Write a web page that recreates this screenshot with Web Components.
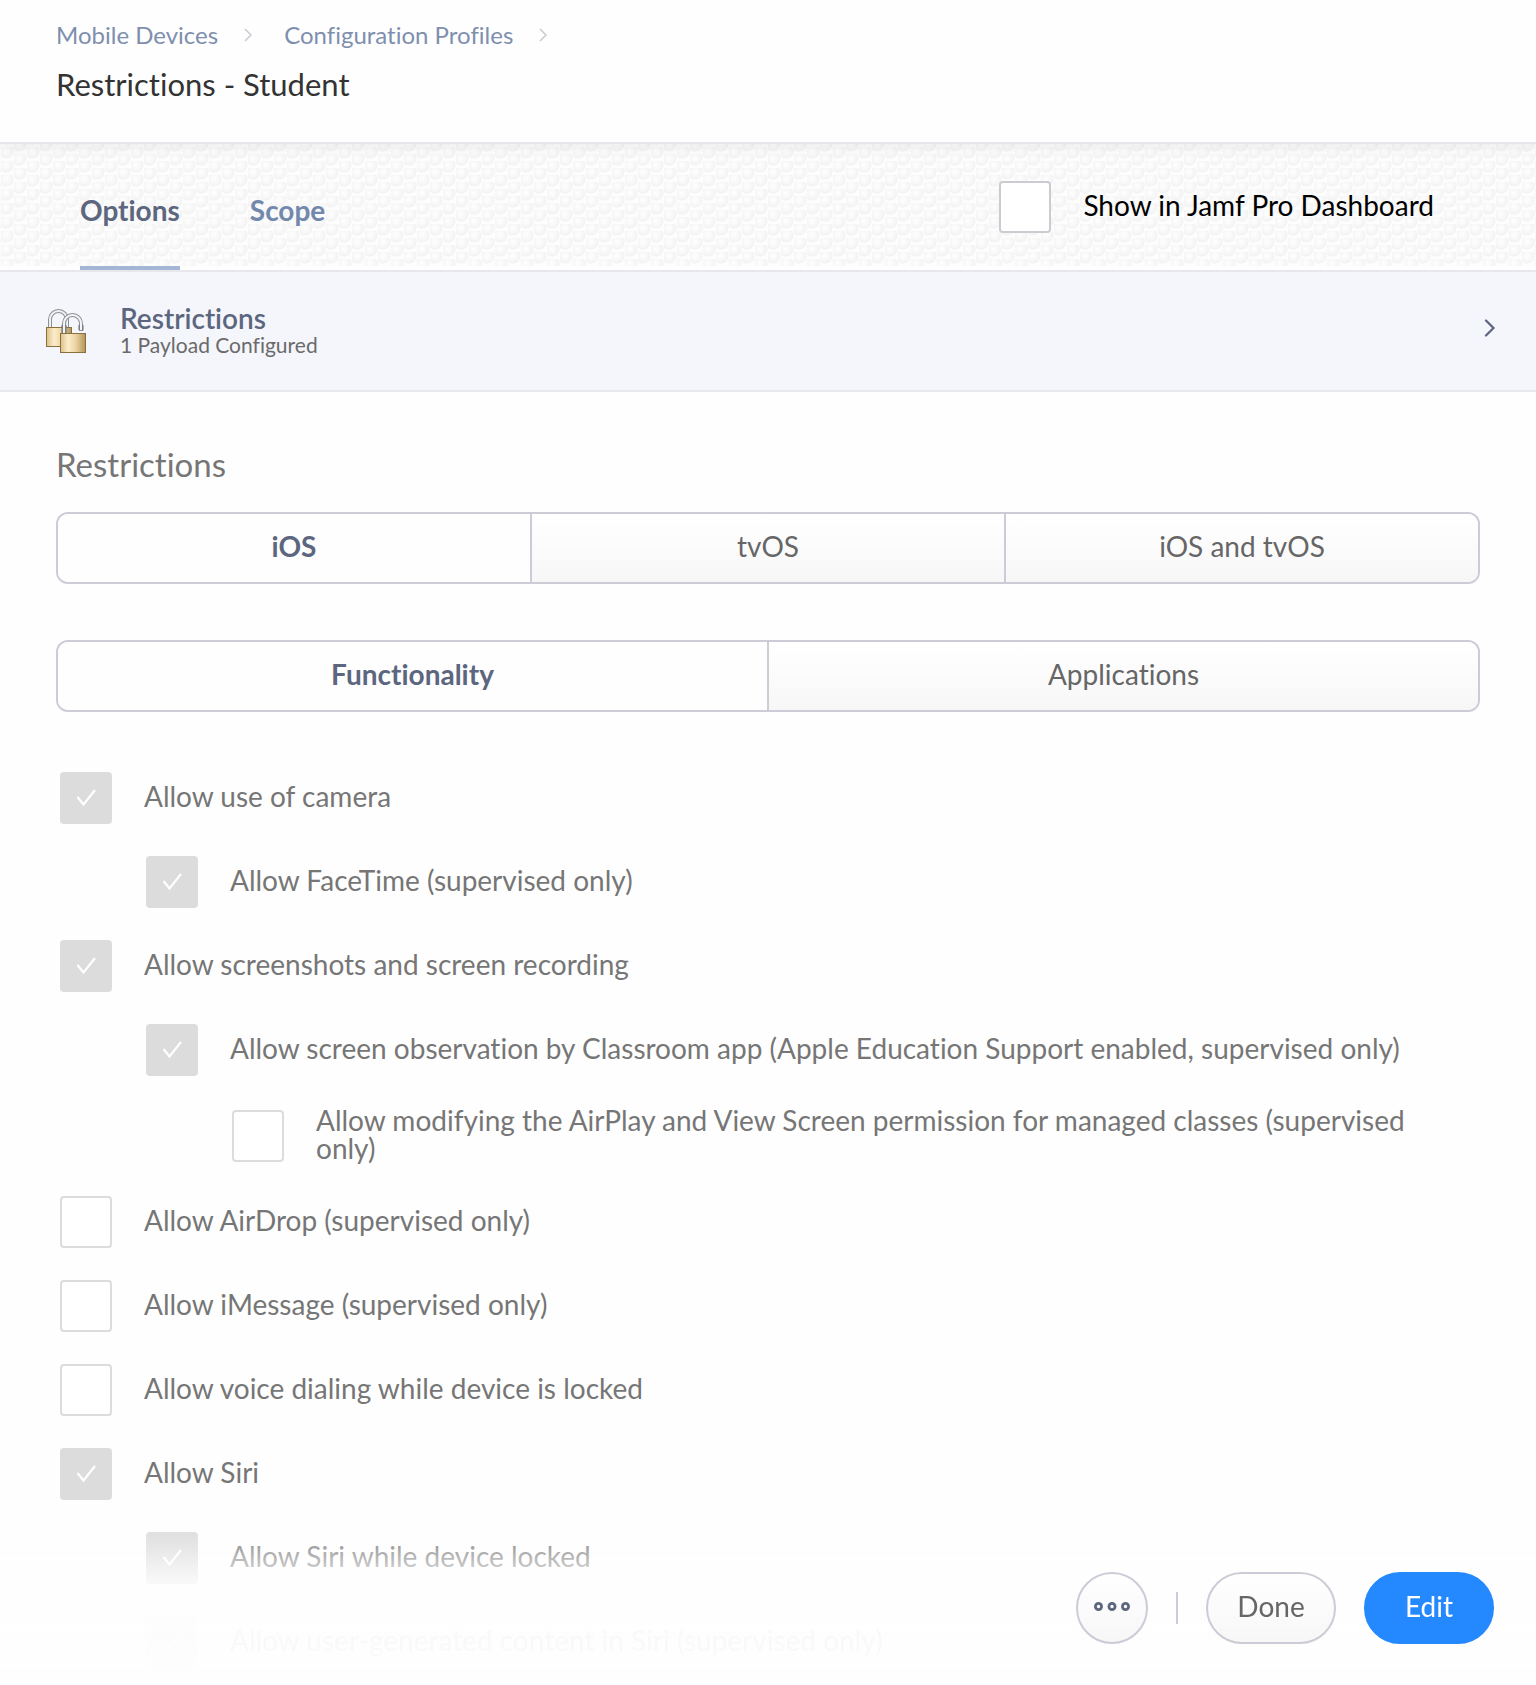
<!DOCTYPE html>
<html lang="en">
<head>
    <meta charset="UTF-8">
    <meta name="viewport" content="width=device-width, initial-scale=1.0">
    <title>Restrictions - Student</title>
    <style>
        body {
            margin: 0;
            background: #fefefe;
            font-family: Lato, "Open Sans", sans-serif;
            font-size: 28px;
            font-variant-ligatures: none;
            line-height: 28px;
            color: #666;
        }
    </style>
</head>
<body>
    <config-page>
        <page-header slot="header" heading="Restrictions - Student">
            <crumb-link href="#devices">Mobile Devices</crumb-link>
            <crumb-link href="#profiles">Configuration Profiles</crumb-link>
        </page-header>

        <tab-bar slot="tabs">
            <tab-item href="#options" active>Options</tab-item>
            <tab-item href="#scope">Scope</tab-item>
            <check-option slot="extra" variant="dark">Show in Jamf Pro Dashboard</check-option>
        </tab-bar>

        <payload-row slot="payload" heading="Restrictions" href="#restrictions">1 Payload Configured</payload-row>

        <section-title>Restrictions</section-title>
        <segmented-control items="iOS|tvOS|iOS and tvOS" label="Platform"></segmented-control>
        <segmented-control items="Functionality|Applications" label="Category"></segmented-control>

        <option-list>
            <check-option checked disabled>Allow use of camera</check-option>
            <check-option level="1" checked disabled>Allow FaceTime (supervised only)</check-option>
            <check-option checked disabled>Allow screenshots and screen recording</check-option>
            <check-option level="1" checked disabled>Allow screen observation by Classroom app (Apple Education Support enabled, supervised only)</check-option>
            <check-option level="2" disabled>Allow modifying the AirPlay and View Screen permission for managed classes (supervised only)</check-option>
            <check-option disabled>Allow AirDrop (supervised only)</check-option>
            <check-option disabled>Allow iMessage (supervised only)</check-option>
            <check-option disabled>Allow voice dialing while device is locked</check-option>
            <check-option checked disabled>Allow Siri</check-option>
            <check-option level="1" checked disabled>Allow Siri while device locked</check-option>
            <check-option level="1" checked disabled>Allow user-generated content in Siri (supervised only)</check-option>
        </option-list>

        <action-footer slot="footer">
            <action-button kind="more"></action-button>
            <action-button>Done</action-button>
            <action-button kind="primary">Edit</action-button>
        </action-footer>
    </config-page>

    <script>
        class ConfigPage extends HTMLElement {
            connectedCallback() {
                this.attachShadow({ mode: 'open' });
                this.shadowRoot.innerHTML = `
                    <style>
                        :host {
                            display: block;
                        }

                        main {
                            padding: 52px 56px 16px;
                        }
                    </style>
                    <slot name="header"></slot>
                    <slot name="tabs"></slot>
                    <slot name="payload"></slot>
                    <main><slot></slot></main>
                    <slot name="footer"></slot>
                `;
            }
        }

        class PageHeader extends HTMLElement {
            connectedCallback() {
                this.attachShadow({ mode: 'open' });
                this.shadowRoot.innerHTML = `
                    <style>
                        :host {
                            display: block;
                            position: relative;
                            z-index: 1;
                            padding: 21px 56px 40px;
                            background: #fefefe;
                            border-bottom: 2px solid #e5e6e9;
                            box-shadow: 0 2px 14px rgba(0, 0, 0, 0.08);
                        }

                        nav {
                            display: flex;
                            gap: 32px;
                        }

                        h1 {
                            margin: 17px 0 0;
                            font-size: 31px;
                            font-weight: 400;
                            line-height: 36px;
                            color: #333;
                        }
                    </style>
                    <nav aria-label="Breadcrumb"><slot></slot></nav>
                    <h1>${this.getAttribute('heading')}</h1>
                `;
            }
        }

        class CrumbLink extends HTMLElement {
            connectedCallback() {
                this.attachShadow({ mode: 'open' });
                this.shadowRoot.innerHTML = `
                    <style>
                        :host {
                            display: flex;
                            align-items: center;
                            gap: 26px;
                            font-size: 24px;
                        }

                        a {
                            color: #7e8fae;
                            text-decoration: none;
                        }
                    </style>
                    <a href="${this.getAttribute('href')}"><slot></slot></a>
                    <svg width="8" height="14" viewBox="0 0 8 14" fill="none" stroke="#c8cad0" stroke-width="1.5" aria-hidden="true">
                        <path d="M1 1l6 6-6 6"/>
                    </svg>
                `;
            }
        }

        class TabBar extends HTMLElement {
            connectedCallback() {
                this.attachShadow({ mode: 'open' });
                this.shadowRoot.innerHTML = `
                    <style>
                        :host {
                            display: flex;
                            align-items: center;
                            justify-content: space-between;
                            padding: 0 102px 0 80px;
                            border-bottom: 2px solid #e6e8ec;
                            background:
                                linear-gradient(#fefefe, #fefefe) bottom / 100% 4px no-repeat,
                                radial-gradient(circle at 5px 4px, #fdfdfd 1px, #f3f3f3 7px, transparent 8px) 1px 3px / 26px 14px,
                                radial-gradient(circle at 5px 4px, #fdfdfd 1px, #f3f3f3 7px, transparent 8px) 14px 10px / 26px 14px,
                                #fdfdfd;
                        }

                        nav {
                            display: flex;
                            gap: 70px;
                        }
                    </style>
                    <nav aria-label="Sections"><slot></slot></nav>
                    <slot name="extra"></slot>
                `;
            }
        }

        class TabItem extends HTMLElement {
            connectedCallback() {
                this.attachShadow({ mode: 'open' });
                this.shadowRoot.innerHTML = `
                    <style>
                        :host {
                            display: block;
                        }

                        a {
                            display: block;
                            padding: 50px 0 40px;
                            border-bottom: 4px solid transparent;
                            font-weight: 700;
                            line-height: 32px;
                            color: #7288ad;
                            text-decoration: none;
                        }

                        :host([active]) a {
                            border-color: #a4b6d5;
                            color: #5c667f;
                        }
                    </style>
                    <a href="${this.getAttribute('href')}"><slot></slot></a>
                `;
            }
        }

        class PayloadRow extends HTMLElement {
            connectedCallback() {
                this.attachShadow({ mode: 'open' });
                this.shadowRoot.innerHTML = `
                    <style>
                        :host {
                            display: block;
                            border-bottom: 2px solid #e6e8ec;
                            background: #f5f6fb;
                        }

                        a {
                            display: flex;
                            align-items: center;
                            gap: 34px;
                            padding: 32px 40px 32px 46px;
                            color: inherit;
                            text-decoration: none;
                        }

                        .text {
                            flex: 1;
                        }

                        strong {
                            display: block;
                            font-weight: 600;
                            color: #5c667f;
                        }

                        small {
                            display: block;
                            font-size: 21px;
                            line-height: 26px;
                            color: #6a6a6a;
                        }

                        .chevron {
                            margin-bottom: 6px;
                        }
                    </style>
                    <a href="${this.getAttribute('href')}">
                        <svg width="40" height="44" viewBox="0 0 40 44" fill="none" aria-hidden="true">
                            <defs>
                                <linearGradient id="brass">
                                    <stop offset="0" stop-color="#dcbf85"/>
                                    <stop offset=".3" stop-color="#fbedcb"/>
                                    <stop offset=".6" stop-color="#ecd5a2"/>
                                    <stop offset="1" stop-color="#b4935a"/>
                                </linearGradient>
                            </defs>
                            <path d="M4 19V10.500a8.500 8.500 0 0 1 17 0V19" stroke="#8d9095" stroke-width="4"/>
                            <path d="M4 19V10.500a8.500 8.500 0 0 1 17 0V19" stroke="#eff0f2" stroke-width="2"/>
                            <rect x=".5" y="18.500" width="25" height="19" fill="url(#brass)" stroke="#8a703f"/>
                            <path d="M18 25V14.500a8.500 8.500 0 0 1 17 0V22" stroke="#8d9095" stroke-width="4"/>
                            <path d="M18 25V14.500a8.500 8.500 0 0 1 17 0V21" stroke="#f4f5f7" stroke-width="2"/>
                            <path d="M16 25v-9M20 25v-9M33 16v5M37 16v5.500" stroke="#6b6e73"/>
                            <rect x="14.500" y="24.500" width="25" height="19" fill="url(#brass)" stroke="#8a703f"/>
                        </svg>
                        <span class="text">
                            <strong>${this.getAttribute('heading')}</strong>
                            <small><slot></slot></small>
                        </span>
                        <svg class="chevron" width="12" height="18" viewBox="0 0 12 18" fill="none" stroke="#5c667f" stroke-width="2.200" stroke-linecap="round" aria-hidden="true">
                            <path d="M2 1.500L9.500 9 2 16.500"/>
                        </svg>
                    </a>
                `;
            }
        }

        class SectionTitle extends HTMLElement {
            connectedCallback() {
                this.attachShadow({ mode: 'open' });
                this.shadowRoot.innerHTML = `
                    <style>
                        :host {
                            display: block;
                        }

                        h2 {
                            margin: 0 0 28px;
                            font-size: 33px;
                            font-weight: 400;
                            line-height: 40px;
                            color: #767676;
                        }
                    </style>
                    <h2><slot></slot></h2>
                `;
            }
        }

        class SegmentedControl extends HTMLElement {
            connectedCallback() {
                const items = this.getAttribute('items').split('|');
                this.attachShadow({ mode: 'open' });
                this.shadowRoot.innerHTML = `
                    <style>
                        :host {
                            display: block;
                            margin-bottom: 56px;
                        }

                        .group {
                            display: flex;
                            border: 2px solid #cbccd5;
                            border-radius: 12px;
                            overflow: hidden;
                        }

                        button {
                            flex: 1 1 0;
                            padding: 18px 0 22px;
                            border: none;
                            background: linear-gradient(#fff, #f7f7f8);
                            font: inherit;
                            color: #666;
                            cursor: pointer;
                        }

                        button + button {
                            border-left: 2px solid #cbccd5;
                        }

                        button[aria-pressed="true"] {
                            background: #fefefe;
                            font-weight: 700;
                            color: #5c667f;
                        }
                    </style>
                    <div class="group" role="group" aria-label="${this.getAttribute('label')}">
                        ${items.map((item, i) => `<button type="button" aria-pressed="${i === 0}">${item}</button>`).join('')}
                    </div>
                `;

                const buttons = this.shadowRoot.querySelectorAll('button');
                buttons.forEach(button => {
                    button.addEventListener('click', () => {
                        buttons.forEach(b => b.setAttribute('aria-pressed', b === button));
                    });
                });
            }
        }

        class OptionList extends HTMLElement {
            connectedCallback() {
                this.attachShadow({ mode: 'open' });
                this.shadowRoot.innerHTML = `
                    <style>
                        :host {
                            display: flex;
                            flex-direction: column;
                            gap: 32px;
                            padding: 4px 24px 0 4px;
                        }
                    </style>
                    <slot></slot>
                `;
            }
        }

        class CheckOption extends HTMLElement {
            connectedCallback() {
                const checked = this.hasAttribute('checked') ? 'checked' : '';
                const disabled = this.hasAttribute('disabled') ? 'disabled' : '';
                this.attachShadow({ mode: 'open' });
                this.shadowRoot.innerHTML = `
                    <style>
                        :host {
                            display: block;
                            color: #767676;
                        }

                        :host([level="1"]) {
                            padding-left: 86px;
                        }

                        :host([level="2"]) {
                            padding-left: 172px;
                        }

                        :host([variant="dark"]) {
                            color: #000;
                        }

                        label {
                            display: flex;
                            align-items: center;
                            gap: 32px;
                        }

                        .box {
                            display: grid;
                            flex: none;
                        }

                        .box > * {
                            grid-area: 1 / 1;
                            place-self: center;
                        }

                        input {
                            appearance: none;
                            box-sizing: border-box;
                            width: 52px;
                            height: 52px;
                            margin: 0;
                            border: 2px solid #dcdcdc;
                            border-radius: 4px;
                            background: #fff;
                        }

                        :host([variant="dark"]) input {
                            border-color: #cbccd1;
                        }

                        input:checked {
                            background: #dcdcdc;
                        }

                        svg {
                            z-index: 1;
                            visibility: hidden;
                            pointer-events: none;
                        }

                        input:checked + svg {
                            visibility: visible;
                        }

                        .text {
                            margin: -2px 0 2px;
                        }
                    </style>
                    <label>
                        <span class="box">
                            <input type="checkbox" ${checked} ${disabled}>
                            <svg width="20" height="18" viewBox="0 0 20 18" fill="none" stroke="#fff" stroke-width="2.200" aria-hidden="true">
                                <path d="M1.500 8L7.500 15.500 19 1"/>
                            </svg>
                        </span>
                        <span class="text"><slot></slot></span>
                    </label>
                `;
            }
        }

        class ActionFooter extends HTMLElement {
            connectedCallback() {
                this.attachShadow({ mode: 'open' });
                this.shadowRoot.innerHTML = `
                    <style>
                        :host {
                            position: fixed;
                            left: 0;
                            right: 0;
                            bottom: 0;
                            z-index: 2;
                            display: flex;
                            justify-content: flex-end;
                            align-items: center;
                            gap: 28px;
                            padding: 48px 42px 41px;
                            background: linear-gradient(rgba(254, 254, 254, 0), rgba(254, 254, 254, 0.85) 60px, rgba(254, 254, 254, 0.96) 90px, rgba(254, 254, 254, 0.97));
                        }

                        ::slotted([kind="more"]) {
                            padding-right: 30px;
                            background: linear-gradient(#cbccd5, #cbccd5) right center / 2px 32px no-repeat;
                        }
                    </style>
                    <slot></slot>
                `;
            }
        }

        class ActionButton extends HTMLElement {
            connectedCallback() {
                const more = this.getAttribute('kind') === 'more';
                const dots = `
                    <svg width="36" height="9" viewBox="0 0 36 9" fill="none" stroke="#5c667f" stroke-width="2.800" aria-hidden="true">
                        <circle cx="4.500" cy="4.500" r="3.100"/>
                        <circle cx="18" cy="4.500" r="3.100"/>
                        <circle cx="31.500" cy="4.500" r="3.100"/>
                    </svg>
                `;
                this.attachShadow({ mode: 'open' });
                this.shadowRoot.innerHTML = `
                    <style>
                        :host {
                            display: block;
                        }

                        button {
                            display: flex;
                            align-items: center;
                            justify-content: center;
                            box-sizing: border-box;
                            min-width: 130px;
                            height: 72px;
                            padding: 0 0 4px;
                            border: 2px solid #cbccd5;
                            border-radius: 36px;
                            background: linear-gradient(#fff, #f7f7f8);
                            font: inherit;
                            color: #666;
                            cursor: pointer;
                        }

                        :host([kind="more"]) button {
                            min-width: 72px;
                        }

                        :host([kind="primary"]) button {
                            border-color: #2489ff;
                            background: #2489ff;
                            color: #fff;
                        }
                    </style>
                    <button type="button" ${more ? 'aria-label="More"' : ''}>${more ? dots : '<slot></slot>'}</button>
                `;
            }
        }

        customElements.define('config-page', ConfigPage);
        customElements.define('page-header', PageHeader);
        customElements.define('crumb-link', CrumbLink);
        customElements.define('tab-bar', TabBar);
        customElements.define('tab-item', TabItem);
        customElements.define('payload-row', PayloadRow);
        customElements.define('section-title', SectionTitle);
        customElements.define('segmented-control', SegmentedControl);
        customElements.define('option-list', OptionList);
        customElements.define('check-option', CheckOption);
        customElements.define('action-footer', ActionFooter);
        customElements.define('action-button', ActionButton);
    </script>
</body>
</html>
